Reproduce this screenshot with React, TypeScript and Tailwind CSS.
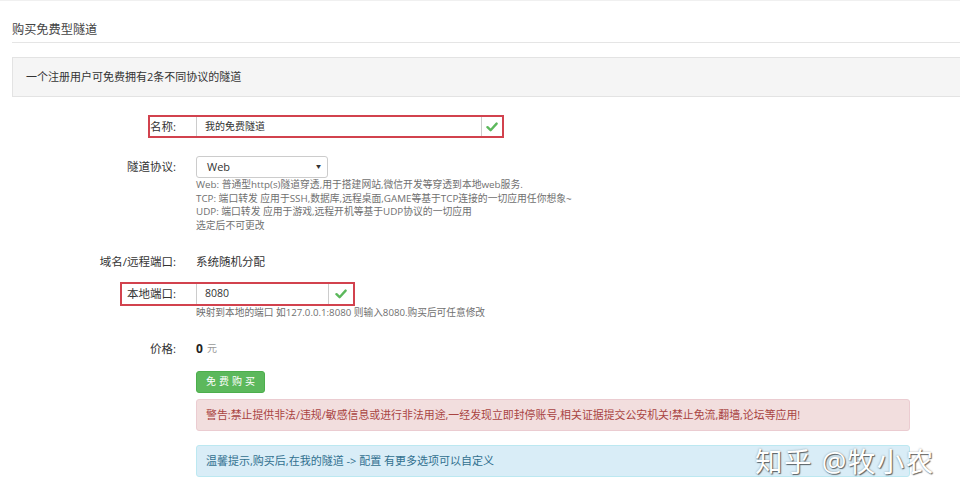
import React from "react";

const font = "font-['Open_Sans','Noto_Sans_CJK_SC',sans-serif]";

function Check() {
  return (
    <svg width="12" height="10" viewBox="0 0 12 10" className="shrink-0">
      <path d="M1.5 5.2 L4.6 8.2 L10.6 1.6" fill="none" stroke="#5cb85c" strokeWidth="2.4" strokeLinecap="round" strokeLinejoin="round" />
    </svg>
  );
}

function Row({ label, children, className = "" }: { label: string; children: React.ReactNode; className?: string }) {
  return (
    <div className={`relative flex items-center ${className}`}>
      <div className="w-[164px] shrink-0 text-right text-[11.5px] text-[#333]">{label}</div>
      <div className="ml-5 flex min-w-0 flex-1 items-center">{children}</div>
    </div>
  );
}

export default function App() {
  return (
    <div className={`relative h-[500px] w-[960px] overflow-hidden border-t border-[#f0f0f0] bg-white pl-3 ${font}`}>
      <div className="border-b border-[#e5e5e5] pb-[4px] pt-[20px] text-[12.2px] leading-[17px] text-[#444]">
        购买免费型隧道
      </div>

      <div className="mt-[14px] flex h-[40px] items-center border border-r-0 border-[#e3e3e3] bg-[#f5f5f5] pl-[13px] text-[11px] text-[#333]">
        一个注册用户可免费拥有2条不同协议的隧道
      </div>

      <div className="pr-[50px]">
        {/* 名称 */}
        <Row label="名称:" className="mt-[19px] h-[21px]">
          <div className="flex h-[21px] w-[286px] items-center border border-[#ccc] bg-white pl-[8px] text-[10px] text-[#333]">
            我的免费隧道
          </div>
          <div className="flex w-[20px] justify-center">
            <Check />
          </div>
          <div className="pointer-events-none absolute left-[136px] top-[-1px] h-[23px] w-[356px] border-2 border-[#d2424e]" />
        </Row>

        {/* 协议 */}
        <Row label="隧道协议:" className="mt-[19px] h-[22px]">
          <div className="flex h-[22px] w-[132px] items-center justify-between rounded-[3px] border border-[#ccc] bg-white pl-[10px] pr-[6px] text-[11px] text-[#333]">
            <span>Web</span>
            <span className="text-[5px] text-[#333]">▼</span>
          </div>
        </Row>
        <div className="ml-[184px] text-[9.8px] leading-[13.7px] text-[#707070]">
          <div>Web: 普通型http(s)隧道穿透,用于搭建网站,微信开发等穿透到本地web服务.</div>
          <div>TCP: 端口转发 应用于SSH,数据库,远程桌面,GAME等基于TCP连接的一切应用任你想象~</div>
          <div>UDP: 端口转发 应用于游戏,远程开机等基于UDP协议的一切应用</div>
          <div>选定后不可更改</div>
        </div>

        {/* 域名 */}
        <Row label="域名/远程端口:" className="mt-[19px] h-[20px]">
          <span className="text-[11.5px] text-[#333]">系统随机分配</span>
        </Row>

        {/* 本地端口 */}
        <Row label="本地端口:" className="mt-[11px] h-[22px]">
          <div className="flex h-[22px] w-[133px] items-center border border-[#ccc] bg-white pl-[8px] text-[10.5px] text-[#333]">
            8080
          </div>
          <div className="flex w-[24px] justify-center">
            <Check />
          </div>
          <div className="pointer-events-none absolute left-[108px] top-[-1px] h-[24px] w-[235px] border-2 border-[#d2424e]" />
        </Row>
        <div className="ml-[184px] mt-[1px] text-[9.7px] leading-[14px] text-[#707070]">
          映射到本地的端口 如127.0.0.1:8080 则输入8080.购买后可任意修改
        </div>

        {/* 价格 */}
        <Row label="价格:" className="mt-[19px] h-[20px]">
          <span className="text-[12px] font-bold text-[#222]">0</span>
          <span className="ml-[4px] text-[10px] text-[#999]">元</span>
        </Row>

        <div className="ml-[184px] mt-[12px]">
          <div className="flex h-[22px] w-[69px] items-center justify-center rounded-[3px] border border-[#4cae4c] bg-[#5cb85c] pl-[3px] text-[10px] tracking-[3px] text-white">
            免费购买
          </div>
        </div>

        <div className="ml-[184px] mt-[6px] flex h-[32px] items-center rounded-[3px] border border-[#ebccd1] bg-[#f2dede] pl-[9px] text-[10.9px] text-[#a94442]">
          警告:禁止提供非法/违规/敏感信息或进行非法用途,一经发现立即封停账号,相关证据提交公安机关!禁止免流,翻墙,论坛等应用!
        </div>

        <div className="ml-[184px] mt-[14px] flex h-[32px] items-center rounded-[3px] border border-[#bce8f1] bg-[#d9edf7] pl-[9px] text-[11px] text-[#31708f]">
          温馨提示,购买后,在我的隧道 -&gt; 配置 有更多选项可以自定义
        </div>
      </div>

      <div className="pointer-events-none absolute left-[755px] top-[444px] text-[27.5px] leading-[34px] tracking-[1.5px] text-white [text-shadow:1px_1px_1px_rgba(0,0,0,0.55),0_0_2px_rgba(0,0,0,0.35)]">
        知乎 @牧小农
      </div>
    </div>
  );
}
